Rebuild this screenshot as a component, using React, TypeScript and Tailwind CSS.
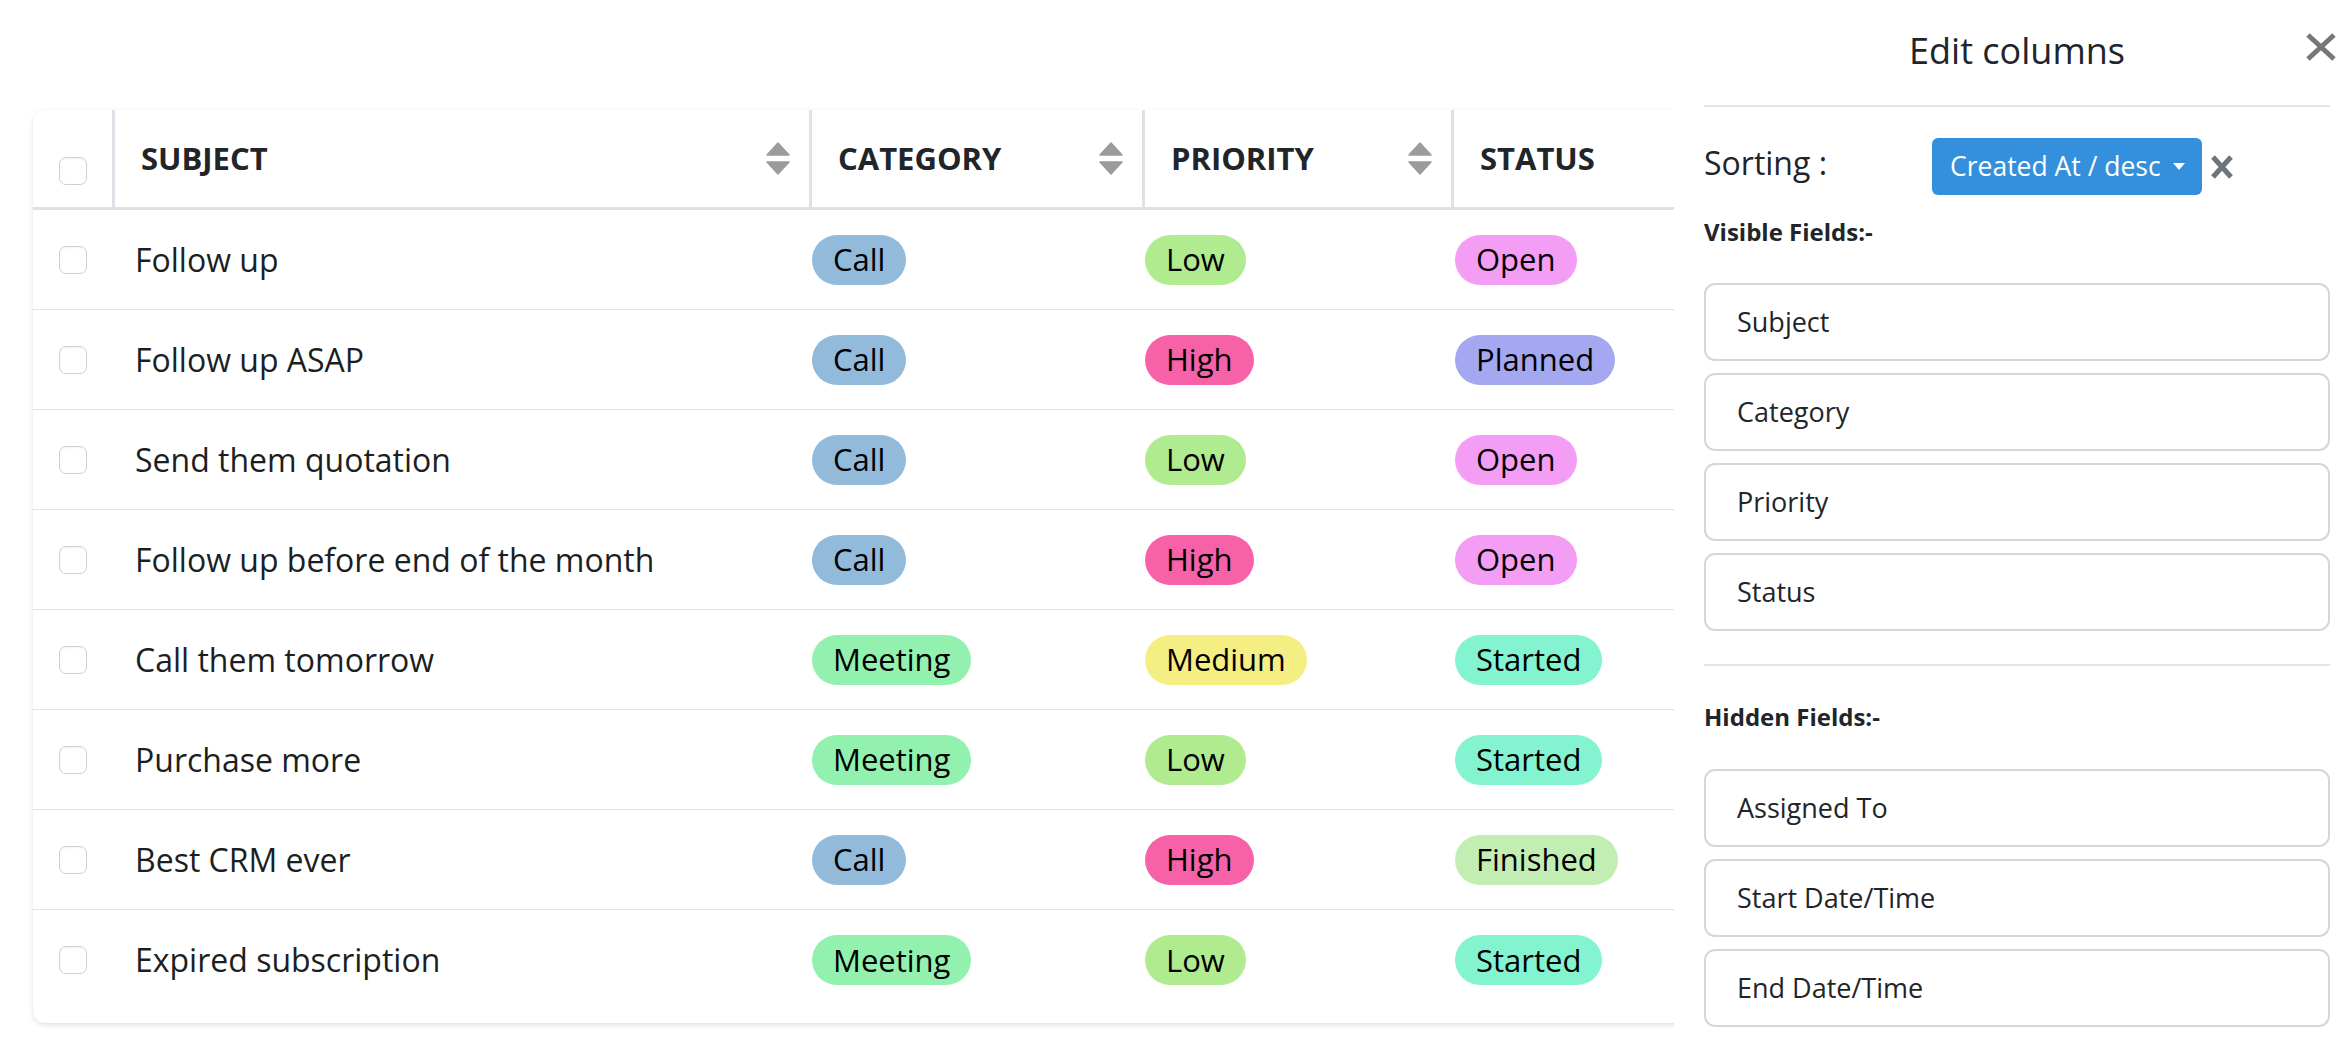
import React from 'react';

type Row = {
  subject: string;
  category: string;
  priority: string;
  status: string;
};

const rows: Row[] = [
  { subject: 'Follow up', category: 'Call', priority: 'Low', status: 'Open' },
  { subject: 'Follow up ASAP', category: 'Call', priority: 'High', status: 'Planned' },
  { subject: 'Send them quotation', category: 'Call', priority: 'Low', status: 'Open' },
  { subject: 'Follow up before end of the month', category: 'Call', priority: 'High', status: 'Open' },
  { subject: 'Call them tomorrow', category: 'Meeting', priority: 'Medium', status: 'Started' },
  { subject: 'Purchase more', category: 'Meeting', priority: 'Low', status: 'Started' },
  { subject: 'Best CRM ever', category: 'Call', priority: 'High', status: 'Finished' },
  { subject: 'Expired subscription', category: 'Meeting', priority: 'Low', status: 'Started' },
];

const badgeColors: Record<string, string> = {
  Call: 'bg-[#92badb]',
  Meeting: 'bg-[#92f1ae]',
  Low: 'bg-[#b1eb90]',
  High: 'bg-[#f761a8]',
  Medium: 'bg-[#f4ee83]',
  Open: 'bg-[#f49df5]',
  Planned: 'bg-[#a3a8f0]',
  Started: 'bg-[#84f3cf]',
  Finished: 'bg-[#c3eeb3]',
};

const visibleFields = ['Subject', 'Category', 'Priority', 'Status'];
const hiddenFields = ['Assigned To', 'Start Date/Time', 'End Date/Time'];

const cols = 'grid grid-cols-[82px_697px_333px_309px_1fr]';

function Checkbox({ className = '' }: { className?: string }) {
  return (
    <span
      className={`block w-[28px] h-[28px] rounded-[7px] border-[1.5px] border-[#d0d0d0] bg-white shadow-[inset_0_1px_2px_rgba(0,0,0,0.05)] ${className}`}
    />
  );
}

function SortIcon() {
  return (
    <svg width="24" height="33" viewBox="0 0 24 33" className="shrink-0">
      <polygon points="12,1 23,13 1,13" fill="#9b9b9b" stroke="#9b9b9b" strokeWidth={1.5} strokeLinejoin="round" />
      <polygon points="1,20 23,20 12,32" fill="#9b9b9b" stroke="#9b9b9b" strokeWidth={1.5} strokeLinejoin="round" />
    </svg>
  );
}

function Badge({ label }: { label: string }) {
  return (
    <span
      className={`inline-flex items-center h-[50px] px-[21px] rounded-full text-[31px] text-black ${badgeColors[label]}`}
    >
      {label}
    </span>
  );
}

function HeaderCell({ label, sortable = true }: { label: string; sortable?: boolean }) {
  return (
    <div className="flex items-center justify-between pl-[26px] pr-[19px] border-r-[3px] border-[#dee2e6]">
      <span className="text-[31px] font-bold text-[#212529] uppercase">{label}</span>
      {sortable && <SortIcon />}
    </div>
  );
}

function FieldBox({ label }: { label: string }) {
  return (
    <div className="flex items-center h-[78px] pl-[31px] border-2 border-[#d3d7dc] rounded-[11px] text-[27px] text-[#212529]">
      {label}
    </div>
  );
}

export default function App() {
  return (
    <div className="relative w-[2352px] h-[1038px] overflow-hidden bg-white font-['Open_Sans',sans-serif]">
      <div className="pt-[110px] pl-[33px]">
        <div className="w-[2290px] rounded-[12px] bg-white shadow-[0_2px_5px_rgba(0,0,0,0.13)] pb-[13px]">
          <div className={`${cols} h-[100px] border-b-[3px] border-[#dee2e6]`}>
            <div className="flex justify-center border-r-[3px] border-[#dee2e6]">
              <Checkbox className="mt-[47px]" />
            </div>
            <HeaderCell label="Subject" />
            <HeaderCell label="Category" />
            <HeaderCell label="Priority" />
            <div className="flex items-center pl-[26px]">
              <span className="text-[31px] font-bold text-[#212529] uppercase">Status</span>
            </div>
          </div>

          {rows.map((row, i) => (
            <div
              key={row.subject}
              className={`${cols} h-[100px] ${i < rows.length - 1 ? 'border-b-[1.5px] border-[#dee2e6]' : ''}`}
            >
              <div className="flex items-center justify-center pr-[3px]">
                <Checkbox />
              </div>
              <div className="flex items-center pl-[20px] text-[32px] text-[#1c1f22]">{row.subject}</div>
              <div className="flex items-center">
                <Badge label={row.category} />
              </div>
              <div className="flex items-center">
                <Badge label={row.priority} />
              </div>
              <div className="flex items-center pl-px">
                <Badge label={row.status} />
              </div>
            </div>
          ))}
        </div>
      </div>

      {/* edit columns drawer */}
      <aside className="absolute top-0 right-0 w-[678px] h-full bg-white pl-[30px] pr-[22px]">
        <div className="grid grid-cols-[1fr_auto_1fr] items-start pt-[27px] mb-[30px]">
          <span />
          <h2 className="text-[36px] leading-[48px] text-[#212529]">Edit columns</h2>
          <button className="justify-self-end mt-[6px] -mr-[7px]">
            <svg width="32" height="28" viewBox="0 0 32 28">
              <path d="M3 2 L29 26 M29 2 L3 26" stroke="#777" strokeWidth={5} strokeLinecap="butt" />
            </svg>
          </button>
        </div>
        <div className="border-t-2 border-[#e1e4e8]" />

        <div className="flex items-center mt-[31px]">
          <span className="w-[228px] mb-[8px] text-[32px] text-[#212529]">Sorting :</span>
          <button className="flex items-center h-[57px] pl-[18px] pr-[17px] rounded-[6px] bg-[#3490dc] text-white text-[26.5px]">
            Created At / desc
            <svg width="12" height="7" viewBox="0 0 12 7" className="ml-[12px]">
              <polygon points="0,0 12,0 6,7" fill="#fff" />
            </svg>
          </button>
          <svg width="24" height="26" viewBox="0 0 24 26" className="ml-[8px]">
            <path d="M3 3 L21 23 M21 3 L3 23" stroke="#6c757d" strokeWidth={5} />
          </svg>
        </div>

        <div className="mt-[21px] text-[24px] leading-[32px] font-bold text-[#212529]">Visible Fields:-</div>
        <div className="flex flex-col gap-[12px] mt-[35px]">
          {visibleFields.map((f) => (
            <FieldBox key={f} label={f} />
          ))}
        </div>

        <div className="border-t-2 border-[#e1e4e8] mt-[33px]" />

        <div className="mt-[35px] text-[24px] leading-[32px] font-bold text-[#212529]">Hidden Fields:-</div>
        <div className="flex flex-col gap-[12px] mt-[36px]">
          {hiddenFields.map((f) => (
            <FieldBox key={f} label={f} />
          ))}
        </div>
      </aside>
    </div>
  );
}
